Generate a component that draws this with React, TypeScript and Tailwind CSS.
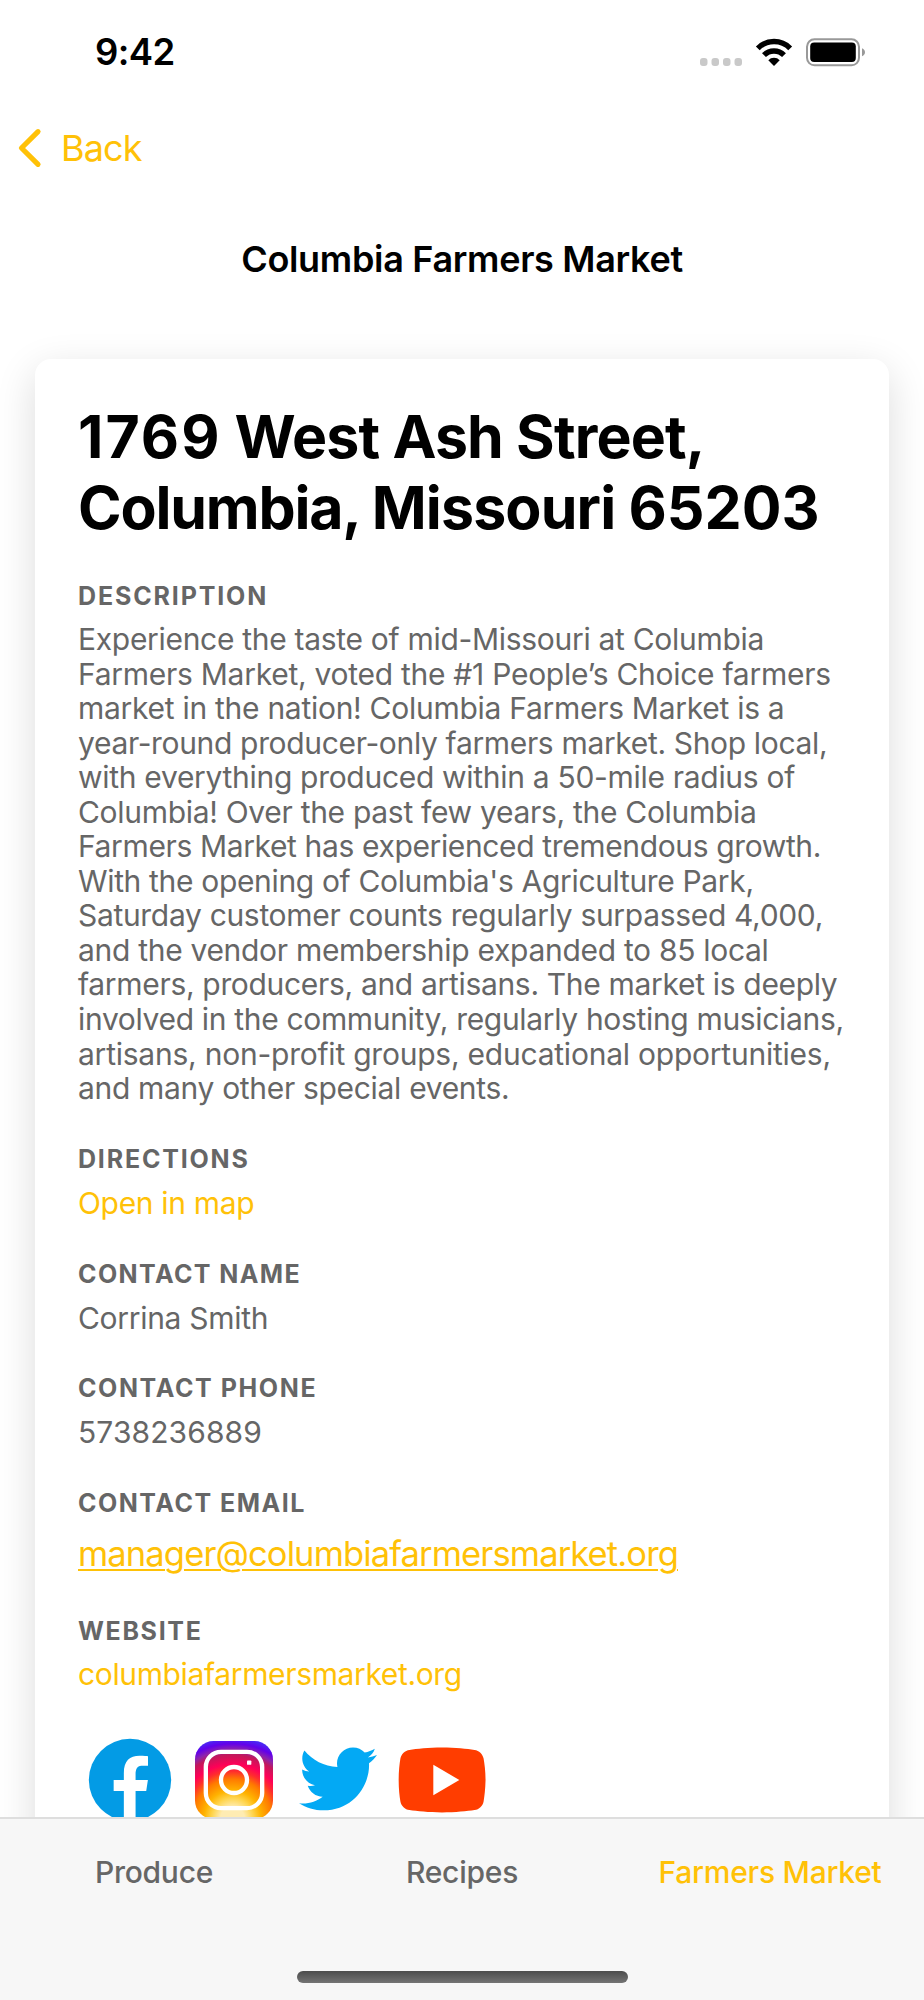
import { useState } from 'react'

const description = [
  { text: 'Experience the taste of mid-Missouri at Columbia', tracking: 'tracking-[-0.3px]' },
  { text: 'Farmers Market, voted the #1 People’s Choice farmers', tracking: 'tracking-[-0.27px]' },
  { text: 'market in the nation! Columbia Farmers Market is a', tracking: 'tracking-[-0.28px]' },
  { text: 'year-round producer-only farmers market. Shop local,', tracking: 'tracking-[-0.34px]' },
  { text: 'with everything produced within a 50-mile radius of', tracking: 'tracking-[-0.3px]' },
  { text: 'Columbia! Over the past few years, the Columbia', tracking: 'tracking-[-0.3px]' },
  { text: 'Farmers Market has experienced tremendous growth.', tracking: 'tracking-[-0.37px]' },
  { text: "With the opening of Columbia's Agriculture Park,", tracking: 'tracking-[-0.34px]' },
  { text: 'Saturday customer counts regularly surpassed 4,000,', tracking: 'tracking-[-0.32px]' },
  { text: 'and the vendor membership expanded to 85 local', tracking: 'tracking-[-0.3px]' },
  { text: 'farmers, producers, and artisans. The market is deeply', tracking: 'tracking-[-0.32px]' },
  { text: 'involved in the community, regularly hosting musicians,', tracking: 'tracking-[-0.33px]' },
  { text: 'artisans, non-profit groups, educational opportunities,', tracking: 'tracking-[-0.23px]' },
  { text: 'and many other special events.', tracking: 'tracking-[-0.32px]' },
]

const tabs = ['Produce', 'Recipes', 'Farmers Market']

function Label({ children, className = '' }: { children: string; className?: string }) {
  return <h2 className={`text-[25px] leading-[30px] font-bold ${className}`}>{children}</h2>
}

function StatusBar() {
  return (
    <div className="flex h-[105px] shrink-0 items-center justify-between pl-[95px] pr-[58px]">
      <span className="text-[36.5px] font-semibold tracking-[-0.6px] text-black">9:42</span>
      <svg width="168" height="32" viewBox="0 0 168 32">
        <g fill="#c9c9c9">
          <rect x="2" y="21" width="7.5" height="8" rx="3" />
          <rect x="13.5" y="21" width="7.5" height="8" rx="3" />
          <rect x="25" y="21" width="7.5" height="8" rx="3" />
          <rect x="36.5" y="21" width="7.5" height="8" rx="3" />
        </g>
        {/* wifi */}
        <g fill="none" stroke="#000" strokeWidth="5.4">
          <path d="M59.8 11.3A22.8 22.8 0 0 1 92.2 11.3" />
          <path d="M66 18.2A14 14 0 0 1 86 18.2" />
        </g>
        <path d="M76 29L70.3 23.2A8 8 0 0 1 81.7 23.2Z" fill="#000" />
        {/* battery */}
        <rect x="109" y="2.3" width="52" height="26" rx="7.5" fill="none" stroke="#999" strokeWidth="2" />
        <rect x="112.2" y="5.6" width="45.6" height="19.4" rx="4" fill="#000" />
        <path d="M164 11.2C168 12.7 168 17.7 164 19.2Z" fill="#999" />
      </svg>
    </div>
  )
}

function SocialLinks() {
  return (
    <div className="-ml-[0.5px] mt-[36px] flex">
      <svg className="size-[104px] shrink-0" viewBox="0 0 48 48">
        <circle cx="24" cy="24" r="19" fill="#039be5" />
        <path
          fill="#fff"
          d="M26.572 29.036h4.917l.772-4.995h-5.69v-2.73c0-2.075.678-3.915 2.619-3.915h3.119v-4.359c-.548-.074-1.707-.236-3.897-.236-4.573 0-7.254 2.415-7.254 7.917v3.323h-4.701v4.995h4.701v13.729C22.089 42.905 23.032 43 24 43c.875 0 1.729-.08 2.572-.194z"
        />
      </svg>
      <svg className="size-[104px] shrink-0" viewBox="0 0 48 48">
        <defs>
          <radialGradient id="ig" gradientUnits="userSpaceOnUse" cx="23.3" cy="42" r="40">
            <stop offset="0.14" stopColor="#ffecb3" />
            <stop offset="0.24" stopColor="#ffd54f" />
            <stop offset="0.33" stopColor="#ffb300" />
            <stop offset="0.46" stopColor="#ff7a00" />
            <stop offset="0.55" stopColor="#ff2d2d" />
            <stop offset="0.63" stopColor="#ff0057" />
            <stop offset="0.74" stopColor="#c2185b" />
            <stop offset="0.8" stopColor="#8e24aa" />
            <stop offset="0.87" stopColor="#6200ea" />
            <stop offset="1" stopColor="#304ffe" />
          </radialGradient>
        </defs>
        <rect x="6" y="6" width="36" height="36" rx="8.5" fill="url(#ig)" />
        <rect x="11" y="11" width="26" height="26" rx="7" fill="none" stroke="#fff" strokeWidth="2" />
        <circle cx="24" cy="24" r="6" fill="none" stroke="#fff" strokeWidth="2" />
        <rect x="30" y="15" width="2" height="2" rx="0.4" fill="#fff" />
      </svg>
      <svg className="size-[104px] shrink-0" viewBox="0 0 48 48">
        <path
          fill="#03a9f4"
          d="M42 12.429c-1.323.586-2.746.977-4.247 1.162 1.526-.906 2.7-2.351 3.251-4.058-1.428.837-3.01 1.452-4.693 1.776C34.967 9.884 33.05 9 30.926 9c-4.08 0-7.387 3.278-7.387 7.32 0 .572.067 1.129.193 1.67-6.138-.308-11.582-3.226-15.224-7.654-.64 1.082-1 2.349-1 3.686 0 2.541 1.301 4.778 3.285 6.096-1.211-.037-2.351-.374-3.349-.914v.086c0 3.551 2.547 6.508 5.923 7.181-.617.169-1.269.263-1.941.263-.477 0-.942-.054-1.392-.135.94 2.902 3.667 5.023 6.898 5.086-2.528 1.96-5.712 3.134-9.174 3.134-.598 0-1.183-.034-1.761-.104C9.268 36.786 13.152 38 17.321 38c13.585 0 21.017-11.156 21.017-20.834 0-.317-.01-.633-.025-.945C39.763 15.197 41.013 13.905 42 12.429"
        />
      </svg>
      <svg className="size-[104px] shrink-0" viewBox="0 0 48 48">
        <path
          fill="#ff3d00"
          d="M43.2 33.9c-.4 2.1-2.1 3.7-4.2 4-3.3.5-8.8 1.1-15 1.1-6.1 0-11.6-.6-15-1.1-2.1-.3-3.8-1.9-4.2-4C4.4 31.6 4 28.2 4 24s.4-7.6.8-9.9c.4-2.1 2.1-3.7 4.2-4C12.3 9.6 17.8 9 24 9s11.6.6 15 1.1c2.1.3 3.8 1.9 4.2 4 .4 2.3.9 5.7.9 9.9-.1 4.2-.5 7.6-.9 9.9z"
        />
        <path fill="#fff" d="M20 31V17l12 7z" />
      </svg>
    </div>
  )
}

export default function App() {
  const [activeTab, setActiveTab] = useState('Farmers Market')

  return (
    <div className="flex h-[2000px] w-[924px] flex-col overflow-hidden bg-white font-['Inter',sans-serif] text-[#666666]">
      <StatusBar />

      <button className="flex h-[86px] shrink-0 items-center pl-[17px] text-[#ffc107]">
        <svg width="26" height="42" viewBox="0 0 26 42" fill="none" stroke="currentColor" strokeWidth="5.2" strokeLinecap="round" strokeLinejoin="round">
          <path d="M21 4.7L4.5 21L21 37.3" />
        </svg>
        <span className="pl-[18px] text-[36px] tracking-[-0.9px]">Back</span>
      </button>

      <div className="flex h-[135px] shrink-0 items-center justify-center text-[36px] font-semibold tracking-[-0.32px] text-black">
        Columbia Farmers Market
      </div>

      {/* SCROLLABLE CONTENT */}
      <main className="min-h-0 flex-1 overflow-hidden px-[35px] pt-[33px]">
        <div className="h-[1600px] rounded-[16px] bg-white pt-[42px] pl-[43px] shadow-[0_12px_40px_rgba(0,0,0,0.14)]">
          <h1 className="text-[59px] leading-[71px] font-bold tracking-[-0.85px] whitespace-nowrap text-black">
            <span className="tracking-[2px]">1769</span> West Ash Street,
            <br />
            <span className="tracking-[-1.2px]">Columbia, </span>Missouri <span className="tracking-normal">65203</span>
          </h1>

          <Label className="mt-[38px] tracking-[1.85px]">DESCRIPTION</Label>
          <div className="mt-[11px] text-[30px] leading-[34.54px] whitespace-nowrap">
            {description.map((line) => (
              <p key={line.text} className={line.tracking}>{line.text}</p>
            ))}
          </div>

          <Label className="mt-[38.5px] tracking-[1.8px]">DIRECTIONS</Label>
          <p className="mt-[12px] text-[30px] leading-[34.5px] tracking-[-0.33px] text-[#ffc107]">Open in map</p>

          <Label className="mt-[38.4px] tracking-[1.4px]">CONTACT NAME</Label>
          <p className="mt-[11.5px] text-[30px] leading-[34.5px] tracking-[-0.3px]">Corrina Smith</p>

          <Label className="mt-[38.4px] tracking-[1.6px]">CONTACT PHONE</Label>
          <p className="mt-[11.5px] text-[30px] leading-[34.5px] tracking-[0.1px]">5738236889</p>

          <Label className="mt-[38.4px] tracking-[1.5px]">CONTACT EMAIL</Label>
          <p className="mt-[12.5px] text-[34.5px] leading-[48px] tracking-[-0.87px] text-[#ffc107] underline decoration-2 underline-offset-[3px]">
            manager@columbiafarmersmarket.org
          </p>

          <Label className="mt-[37.5px] tracking-[1.65px]">WEBSITE</Label>
          <p className="mt-[11.5px] text-[30px] leading-[34.5px] tracking-[-0.36px] text-[#ffc107]">columbiafarmersmarket.org</p>

          <SocialLinks />
        </div>
      </main>

      {/* TAB BAR */}
      <footer className="flex h-[183px] shrink-0 flex-col items-center border-t-2 border-[#dedede] bg-[#f7f7f7]">
        <nav className="grid h-[106px] w-full grid-cols-3">
          {tabs.map((tab) => (
            <button
              key={tab}
              onClick={() => setActiveTab(tab)}
              className={`text-[30px] font-medium tracking-[-0.25px] ${activeTab === tab ? 'text-[#ffc107]' : 'text-[#666666]'}`}
            >
              {tab}
            </button>
          ))}
        </nav>
        <div className="mt-[46px] h-[12px] w-[331px] rounded-full bg-linear-to-b from-[#4c4c4c] to-[#747474]" />
      </footer>
    </div>
  )
}
